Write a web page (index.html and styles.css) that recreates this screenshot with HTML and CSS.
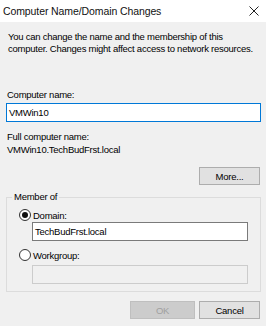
FILE: index.html
```html
<!DOCTYPE html>
<html>
<head>
<meta charset="utf-8">
<link rel="stylesheet" href="styles.css">
</head>
<body>
<div class="window">
  <div class="titlebar">
    <span class="title">Computer Name/Domain Changes</span>
    <svg class="close" width="10" height="10" viewBox="0 0 10 10"><path d="M0.5 0.5 L9.5 9.5 M9.5 0.5 L0.5 9.5" stroke="#222" stroke-width="1" fill="none"/></svg>
  </div>
  <div class="content">
    <p class="desc">You can change the name and the membership of this<br>computer. Changes might affect access to network resources.</p>
    <div class="label name-label">Computer name:</div>
    <div class="input focused">VMWin10</div>
    <div class="label full-label">Full computer name:</div>
    <div class="label full-value">VMWin10.TechBudFrst.local</div>
    <div class="row more-row"><div class="btn">More...</div></div>
    <div class="group">
      <div class="legend">Member of</div>
      <div class="radio-row first"><span class="radio checked"></span><span>Domain:</span></div>
      <div class="input sub">TechBudFrst.local</div>
      <div class="radio-row"><span class="radio"></span><span>Workgroup:</span></div>
      <div class="input sub disabled"></div>
    </div>
    <div class="row actions">
      <div class="btn disabled">OK</div>
      <div class="btn">Cancel</div>
    </div>
  </div>
</div>
</body>
</html>
```
FILE: styles.css
```css
html, body {
  margin: 0;
  padding: 0;
}
body {
  width: 266px;
  height: 326px;
  background: #f0f0f0;
  font-family: "Liberation Sans", Arial, sans-serif;
  font-size: 9.5px;
  letter-spacing: -0.25px;
  color: #000;
  overflow: hidden;
}
.window {
  width: 266px;
  height: 326px;
}
.titlebar {
  height: 22px;
  background: #fff;
  display: flex;
  align-items: center;
  justify-content: space-between;
  padding: 0 7px 0 3px;
}
.title {
  font-size: 10.5px;
  color: #111;
  letter-spacing: -0.1px;
}
.close {
  display: block;
}
.content {
  padding: 0 5px 0 7px;
}
.desc {
  margin: 9px 0 0 1px;
  line-height: 12px;
  white-space: nowrap;
}
.label {
  line-height: 12px;
}
.name-label {
  margin-top: 34px;
}
.input {
  height: 17px;
  border: 1px solid #7a7a7a;
  background: #fff;
  line-height: 17px;
  padding-left: 2px;
  margin-top: 1px;
}
.input.focused {
  border-color: #0078d7;
  margin-left: -1px;
  margin-top: 2px;
}
.full-label {
  margin-top: 9px;
}
.full-value {
  margin-top: 1px;
}
.row {
  display: flex;
  justify-content: flex-end;
  gap: 4px;
}
.more-row {
  margin-top: 11px;
  margin-right: 1px;
}
.btn {
  width: 59px;
  height: 16px;
  border: 1px solid #adadad;
  background: #e1e1e1;
  display: flex;
  align-items: center;
  justify-content: center;
}
.btn.disabled {
  background: #cccccc;
  border-color: #bfbfbf;
  color: #a0a0a0;
  width: 63px;
}
.group {
  margin-top: 12px;
  border: 1px solid #dcdcdc;
  height: 85px;
  position: relative;
  margin-left: -1px;
  padding: 8px 12px 0 10px;
}
.legend {
  position: absolute;
  top: -7px;
  left: 5px;
  padding: 0 2px;
  background: #f0f0f0;
  line-height: 12px;
}
.radio-row {
  display: flex;
  align-items: center;
  gap: 2px;
  height: 12px;
  margin-left: 2px;
}
.radio-row.first {
  margin-top: 3px;
}
.radio {
  width: 12px;
  height: 12px;
  box-sizing: border-box;
  border: 1px solid #333;
  border-radius: 50%;
  background: #fff;
  display: flex;
  align-items: center;
  justify-content: center;
}
.radio.checked::after {
  content: "";
  width: 6px;
  height: 6px;
  border-radius: 50%;
  background: #111;
}
.input.sub {
  margin-left: 15px;
}
.input.sub + .radio-row {
  margin-top: 8px;
}
.input.disabled {
  border-color: #cccccc;
  background: #f0f0f0;
  margin-top: 4px;
}
.actions {
  margin-top: 9px;
  margin-right: 1px;
}
```
